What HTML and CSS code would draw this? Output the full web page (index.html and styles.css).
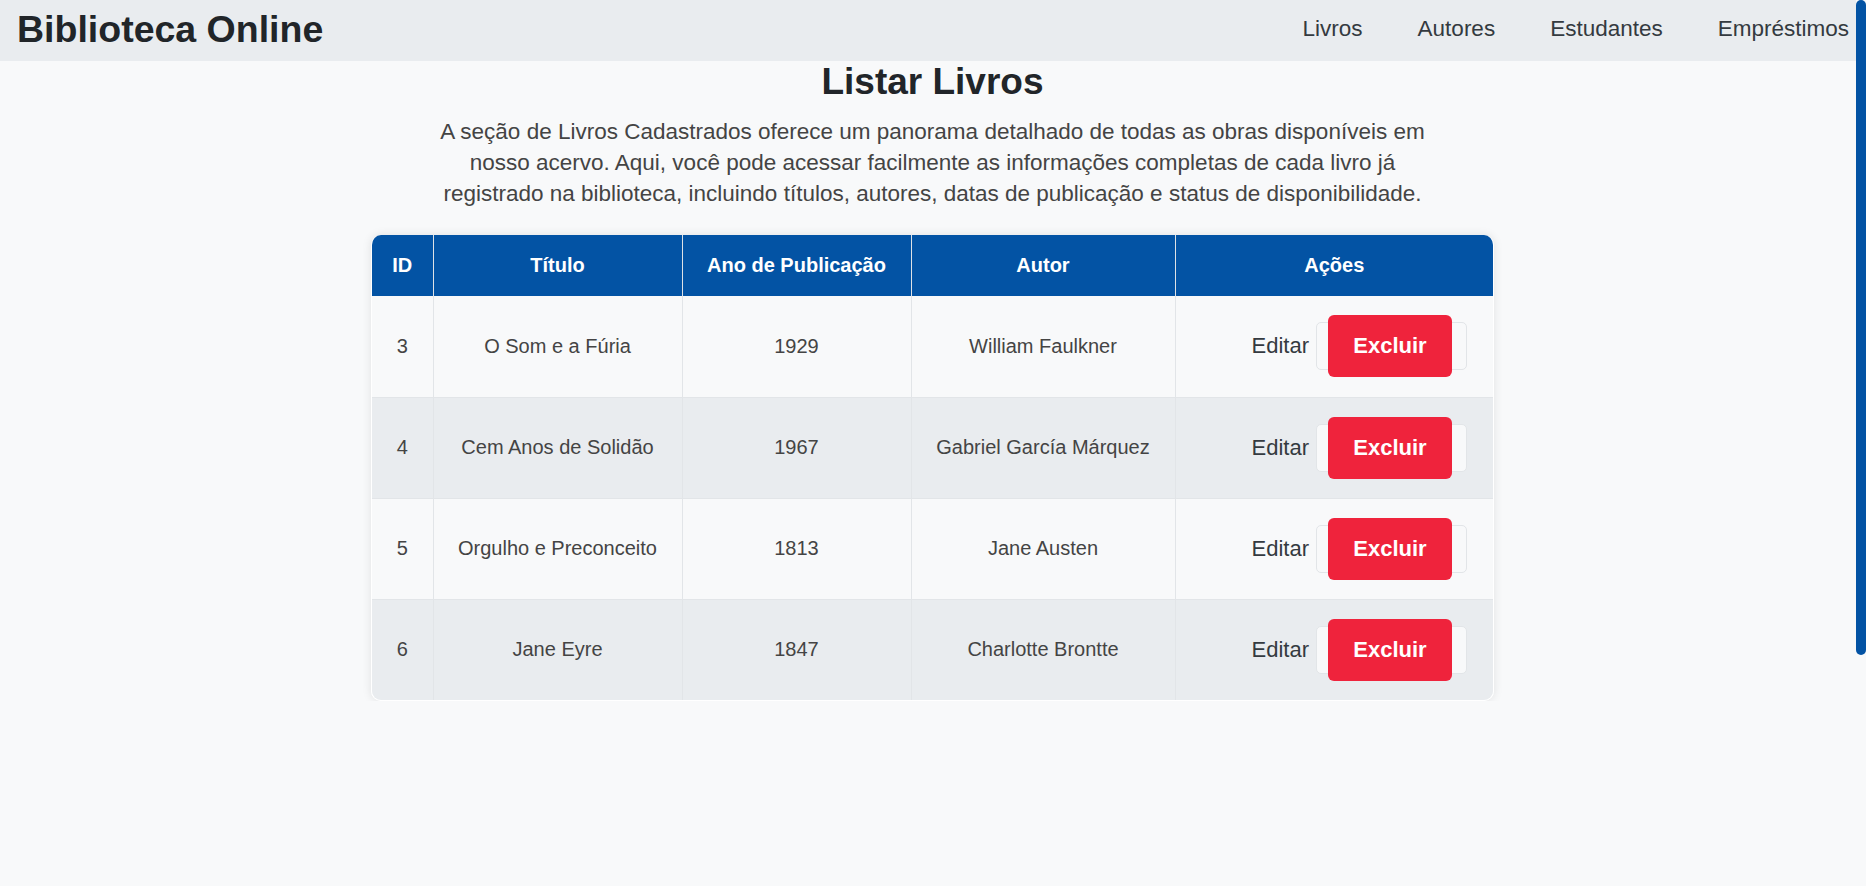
FILE: index.html
```html
<!DOCTYPE html>
<html lang="pt-BR">
<head>
<meta charset="utf-8">
<title>Biblioteca Online - Listar Livros</title>
<link rel="stylesheet" href="styles.css">
</head>
<body>
<header class="navbar">
  <div class="brand">Biblioteca Online</div>
  <nav class="nav-links">
    <a href="#" class="nav-link">Livros</a>
    <a href="#" class="nav-link">Autores</a>
    <a href="#" class="nav-link">Estudantes</a>
    <a href="#" class="nav-link">Empréstimos</a>
  </nav>
</header>
<main class="content">
  <h1 class="page-title">Listar Livros</h1>
  <p class="intro">A seção de Livros Cadastrados oferece um panorama detalhado de todas as obras disponíveis em nosso acervo. Aqui, você pode acessar facilmente as informações completas de cada livro já registrado na biblioteca, incluindo títulos, autores, datas de publicação e status de disponibilidade.</p>
  <div class="table-wrap">
    <table class="books">
      <thead>
        <tr>
          <th class="c-id">ID</th>
          <th class="c-title">Título</th>
          <th class="c-year">Ano de Publicação</th>
          <th class="c-author">Autor</th>
          <th class="c-actions">Ações</th>
        </tr>
      </thead>
      <tbody>
        <tr>
          <td>3</td><td>O Som e a Fúria</td><td>1929</td><td>William Faulkner</td>
          <td class="actions"><div class="actions-inner"><a href="#" class="edit">Editar</a><form class="del-form"><button type="button" class="btn-del">Excluir</button></form></div></td>
        </tr>
        <tr>
          <td>4</td><td>Cem Anos de Solidão</td><td>1967</td><td>Gabriel García Márquez</td>
          <td class="actions"><div class="actions-inner"><a href="#" class="edit">Editar</a><form class="del-form"><button type="button" class="btn-del">Excluir</button></form></div></td>
        </tr>
        <tr>
          <td>5</td><td>Orgulho e Preconceito</td><td>1813</td><td>Jane Austen</td>
          <td class="actions"><div class="actions-inner"><a href="#" class="edit">Editar</a><form class="del-form"><button type="button" class="btn-del">Excluir</button></form></div></td>
        </tr>
        <tr>
          <td>6</td><td>Jane Eyre</td><td>1847</td><td>Charlotte Brontte</td>
          <td class="actions"><div class="actions-inner"><a href="#" class="edit">Editar</a><form class="del-form"><button type="button" class="btn-del">Excluir</button></form></div></td>
        </tr>
      </tbody>
    </table>
  </div>
</main>
<div class="scroll-thumb" aria-hidden="true"></div>
</body>
</html>
```
FILE: styles.css
```css
* { box-sizing: border-box; }

html, body {
  margin: 0;
  padding: 0;
}

html { overflow: hidden; }

body {
  background: #f8f9fa;
  font-family: "Liberation Sans", Arial, sans-serif;
  color: #212529;
  padding-right: 10px;
}

.scroll-thumb {
  position: fixed;
  top: 0;
  right: 0;
  width: 10px;
  height: 655px;
  background: #0353a4;
  border-radius: 5px;
}

.navbar {
  height: 61px;
  background: #e9ecef;
  display: flex;
  align-items: center;
  justify-content: space-between;
  padding: 0 7px 0 17px;
}

.brand {
  font-size: 37.5px;
  font-weight: 700;
  color: #212529;
  margin-bottom: 2px;
}

.nav-links {
  display: flex;
  gap: 55px;
  margin-bottom: 4px;
}

.nav-link {
  font-size: 22.5px;
  color: #343a40;
  text-decoration: none;
}

.content {
  padding: 0 0 0 9px;
  display: flex;
  flex-direction: column;
  align-items: center;
}

.page-title {
  margin: 0;
  font-size: 37px;
  line-height: 42px;
  font-weight: 700;
  color: #212529;
}

.intro {
  max-width: 1000px;
  margin: 13px 0 0;
  font-size: 22.5px;
  line-height: 31px;
  text-align: center;
  color: #444;
}

.table-wrap {
  margin-top: 26px;
  width: 1123px;
  border-radius: 10px;
  overflow: hidden;
  box-shadow: 0 0 10px rgba(0, 0, 0, 0.1);
  border: 1px solid #fff;
  border-top: 0;
}

.books {
  width: 100%;
  border-collapse: collapse;
  table-layout: fixed;
  font-size: 20px;
}

.books th {
  background: #0353a4;
  color: #fff;
  font-weight: 700;
  height: 61px;
  padding: 0 8px;
  text-align: center;
  border-left: 1px solid #dee2e6;
}

.books th:first-child,
.books td:first-child { border-left: 0; }

.c-id { width: 61px; }
.c-title { width: 249px; }
.c-year { width: 229px; }
.c-author { width: 264px; }

.books td {
  height: 101px;
  padding: 0 8px;
  text-align: center;
  color: #444;
  border-left: 1px solid #e2e5e8;
  border-top: 1px solid #e2e5e8;
}

.books tbody tr:first-child td { border-top: 0; }

.books tbody tr:nth-child(odd) td { background: #f8f9fa; }
.books tbody tr:nth-child(even) td { background: #e9ecef; }

.actions-inner {
  display: flex;
  align-items: center;
  justify-content: flex-end;
  padding-right: 18px;
}

.edit {
  font-size: 22px;
  color: #343a40;
  text-decoration: none;
  margin-right: 7px;
}

.del-form {
  margin: 0;
  height: 48px;
  width: 151px;
  display: flex;
  align-items: center;
  padding-left: 11px;
  background: #f8f9fa;
  border: 1px solid #e2e5e8;
  border-radius: 5px;
}

.btn-del {
  flex: none;
  height: 62px;
  width: 124px;
  padding: 0;
  border: 0;
  border-radius: 6px;
  background: #ef233c;
  color: #fff;
  font-family: "Liberation Sans", Arial, sans-serif;
  font-size: 22px;
  font-weight: 700;
  cursor: pointer;
}
```
